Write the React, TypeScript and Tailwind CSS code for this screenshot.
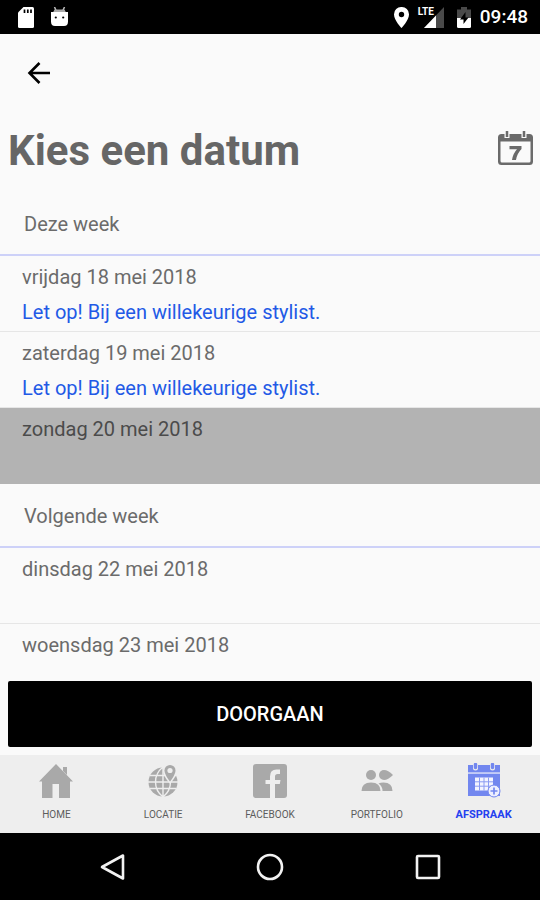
import { useState } from "react";
import clsx from "clsx";

type Day = { label: string; note?: string; closed?: boolean };

const weeks: { title: string; days: Day[] }[] = [
  {
    title: "Deze week",
    days: [
      { label: "vrijdag 18 mei 2018", note: "Let op! Bij een willekeurige stylist." },
      { label: "zaterdag 19 mei 2018", note: "Let op! Bij een willekeurige stylist." },
      { label: "zondag 20 mei 2018", closed: true },
    ],
  },
  {
    title: "Volgende week",
    days: [{ label: "dinsdag 22 mei 2018" }, { label: "woensdag 23 mei 2018" }],
  },
];

function StatusBar() {
  return (
    <div className="flex h-[34px] shrink-0 items-center justify-between bg-black pl-[18px] pr-3 text-white">
      <div className="flex items-center gap-4">
        <svg width="17" height="21" viewBox="0 0 17 21">
          <path d="M5.500 0h9A1.500 1.500 0 0 1 16 1.500v18a1.500 1.500 0 0 1-1.500 1.500h-13A1.500 1.500 0 0 1 0 19.500V5.500z" fill="#fff" />
          <path d="M6.500 2.500v3.500M9.800 2.500v3.500M13 2.500v3.500" stroke="#000" strokeWidth="1.700" />
        </svg>
        <svg width="17" height="21" viewBox="0 0 17 21">
          <path d="M3.500 0l2 4.500M13.500 0l-2 4.500" stroke="#bbb" strokeWidth="1.500" />
          <path d="M3.500 2.500h10l1.500 3H2z" fill="#aaa" />
          <path d="M0 5h17v9.500q0 4.500-4 4.500H4q-4 0-4-4.500z" fill="#fff" />
          <circle cx="4.800" cy="10.500" r="1.100" />
          <circle cx="12.200" cy="10.500" r="1.100" />
        </svg>
      </div>
      <div className="flex items-center">
        <svg width="15" height="21" viewBox="0 0 15 21" className="mr-[9px]">
          <path fillRule="evenodd" d="M7.500 0A7.300 7.300 0 0 1 15 7.400C15 13 7.500 21 7.500 21S0 13 0 7.400A7.300 7.300 0 0 1 7.500 0zm0 4.800a2.700 2.700 0 1 0 0 5.400 2.700 2.700 0 0 0 0-5.400z" fill="#fff" />
        </svg>
        <div className="relative mr-3 h-[21px] w-[27px]">
          <svg width="27" height="21" viewBox="0 0 27 21">
            <path d="M26 0v21H6z" fill="#4a4a4a" />
            <path d="M18 8.400V21H6z" fill="#fff" />
          </svg>
          <span className="absolute left-0 top-0 bg-black text-[10px] leading-[10px] font-bold">LTE</span>
        </div>
        <svg width="14" height="21" viewBox="0 0 14 21" className="mr-[9px]">
          <path d="M4 0h6v2.500h4V11H0V2.500h4z" fill="#4a4a4a" />
          <path d="M0 11h14v8.500q0 1.500-1.500 1.500h-11Q0 21 0 19.500z" fill="#fff" />
          <path d="M8.500 5l-5.500 7.500h3.500V17l5-6.500H8.500z" fill="#000" />
        </svg>
        <span className="text-[19px] leading-6 font-medium">09:48</span>
      </div>
    </div>
  );
}

function CalendarIcon() {
  return (
    <svg width="35" height="36" viewBox="0 0 35 36">
      <path fillRule="evenodd" d="M3.500 3h28Q35 3 35 6.500v24q0 3.500-3.500 3.500h-28Q0 34 0 30.500v-24Q0 3 3.500 3zM2.500 10.500v19.500q0 1.500 1.500 1.500h27q1.500 0 1.500-1.500V10.500z" fill="#6a6a6a" />
      <path d="M9 0v7M26 0v7" stroke="#fafafa" strokeWidth="5" />
      <path d="M9 0v6M26 0v6" stroke="#6a6a6a" strokeWidth="2.500" />
      <path d="M11.500 15h12v3q-4.500 4.500-5.500 11h-4q1-6.500 5-10.700h-7.500z" fill="#6a6a6a" />
    </svg>
  );
}

function HomeIcon() {
  return (
    <svg width="34" height="36" viewBox="0 0 34 36" fill="#a9a9a9">
      <path d="M17 1L34 18.500h-3V35H20V21h-6.500v14H3V18.500H0z" />
      <path d="M24 4h4v8l-4-4z" />
    </svg>
  );
}

function GlobeIcon() {
  return (
    <svg width="34" height="36" viewBox="0 0 34 36">
      <circle cx="17" cy="19" r="14.500" fill="#a9a9a9" />
      <path d="M2 19h30M4 12.500h26M4 25.500h26M17 4v30M17 4C7 12 7 26 17 34M17 4c10 8 10 22 0 30" fill="none" stroke="#eee" strokeWidth="1.400" />
      <path d="M24 2a5.500 5.500 0 0 1 5.500 5.500C29.500 12 24 18.500 24 18.500S18.500 12 18.500 7.500A5.500 5.500 0 0 1 24 2z" fill="#a9a9a9" stroke="#eee" strokeWidth="3" paintOrder="stroke" />
      <circle cx="24" cy="7.500" r="2.600" fill="#eee" />
    </svg>
  );
}

function FacebookIcon() {
  return (
    <svg width="34" height="36" viewBox="0 0 34 36">
      <rect y="1" width="34" height="34" rx="3" fill="#a9a9a9" />
      <path d="M17 35V21h-4.500v-4H17v-3.500Q17 6.500 23.500 6.500H27v4.500h-2.500Q22 11 22 13.500V17h5.500l-.7 4H22v14z" fill="#eee" />
    </svg>
  );
}

function PeopleIcon() {
  return (
    <svg width="34" height="36" viewBox="0 0 34 36" fill="#a9a9a9">
      <circle cx="11" cy="12" r="5" />
      <path d="M24 7q4 0 9 5-5 5-9 5a5 5 0 0 1 0-10z" />
      <path d="M1.500 28q0-8.500 9.500-8.500t9.500 8.500z" />
      <path d="M18.500 20.500q2-1 5-1 9 0 9 8.500h-10q0-5-4-7.500z" />
    </svg>
  );
}

function AppointmentIcon() {
  return (
    <svg width="34" height="36" viewBox="0 0 34 36">
      <path d="M1 2h32v7.500H1zM1 11h32v22H1z" fill="#7287ef" />
      <path d="M1 9.500h32V11H1z" fill="#c3cbf8" />
      <path d="M8.500 1v4M25.500 1v4" stroke="#eee" strokeWidth="5" strokeLinecap="round" />
      <path d="M8.500 1.500v3M25.500 1.500v3" stroke="#7287ef" strokeWidth="3.500" strokeLinecap="round" />
      <path d="M8 14.500h18v13H8z" fill="#f4f5ff" />
      <path d="M8 18.800h18M8 23.200h18M12.500 14.500v13M17 14.500v13M21.500 14.500v13" stroke="#8b9cf2" />
      <circle cx="27" cy="28" r="6" fill="#eef0ff" stroke="#7287ef" />
      <path d="M27 24.500v7M23.500 28h7" stroke="#7287ef" strokeWidth="1.700" />
    </svg>
  );
}

const tabs = [
  { label: "HOME", Icon: HomeIcon },
  { label: "LOCATIE", Icon: GlobeIcon },
  { label: "FACEBOOK", Icon: FacebookIcon },
  { label: "PORTFOLIO", Icon: PeopleIcon },
  { label: "AFSPRAAK", Icon: AppointmentIcon, active: true },
];

function TabBar() {
  return (
    <nav className="flex h-[78px] shrink-0 bg-[#eeeeee] px-[3px]">
      {tabs.map(({ label, Icon, active }) => (
        <a
          key={label}
          href={`#${label.toLowerCase()}`}
          className={clsx(
            "flex flex-1 flex-col items-center pt-2",
            active ? "text-[11px] font-bold text-[#2440f0]" : "text-[10px] text-[#5c5c5c]"
          )}
        >
          <Icon />
          <span className="mt-2 leading-4">{label}</span>
        </a>
      ))}
    </nav>
  );
}

function SystemNav() {
  return (
    <div className="flex h-[67px] shrink-0 items-center justify-center gap-[130px] bg-black">
      <button aria-label="Terug">
        <svg width="28" height="28" viewBox="0 0 28 28" fill="none" stroke="#f2f2f2" strokeWidth="2.600" strokeLinejoin="round">
          <path d="M25 2.500v23L4 14z" />
        </svg>
      </button>
      <button aria-label="Start">
        <svg width="28" height="28" viewBox="0 0 28 28" fill="none" stroke="#f2f2f2" strokeWidth="2.600">
          <circle cx="14" cy="14" r="12" />
        </svg>
      </button>
      <button aria-label="Overzicht">
        <svg width="28" height="28" viewBox="0 0 28 28" fill="none" stroke="#f2f2f2" strokeWidth="2.600">
          <rect x="3" y="3" width="22" height="22" rx="1" />
        </svg>
      </button>
    </div>
  );
}

export default function App() {
  const [selected, setSelected] = useState("");

  return (
    <div className="flex h-screen flex-col bg-[#fafafa] font-[Roboto,sans-serif] text-[#6b6b6b]">
      <StatusBar />
      <header className="shrink-0 pb-0.5">
        <div className="flex h-[78px] items-center pl-[27px]">
          <button aria-label="Vorige">
            <svg width="24" height="24" viewBox="0 0 24 24" fill="none" stroke="#000" strokeWidth="2.600">
              <path d="M23 12H2.500M12.500 2L2.500 12l10 10" />
            </svg>
          </button>
        </div>
        <div className="flex h-[78px] items-center justify-between pl-2 pr-[7px]">
          <h1 className="text-[42px] leading-[50px] font-bold text-[#666666]">Kies een datum</h1>
          <button aria-label="Kalender" className="pb-1">
            <CalendarIcon />
          </button>
        </div>
      </header>

      <main className="min-h-0 flex-1 overflow-y-auto text-[20px] leading-6 [scrollbar-width:none]">
        {weeks.map((week) => (
          <section key={week.title}>
            <h2 className="h-[64px] border-b-2 border-[#cdd1f8] pl-6 pt-5">{week.title}</h2>
            {week.days.map((day) => (
              <button
                key={day.label}
                disabled={day.closed}
                aria-pressed={selected === day.label}
                onClick={() => setSelected(day.label)}
                className={clsx(
                  "flex min-h-[76px] w-full flex-col gap-[11px] border-b pl-[22px] pt-[9px] pb-[7px] text-left",
                  day.closed ? "border-[#b3b3b3] bg-[#b3b3b3] text-[#4b4b4b]" : "border-[#e6e6e6]"
                )}
              >
                <span>{day.label}</span>
                {day.note && <span className="text-[#2259e6]">{day.note}</span>}
              </button>
            ))}
          </section>
        ))}
      </main>

      <div className="shrink-0 bg-[#fafafa] px-2 pb-2 pt-1">
        <button className="h-[66px] w-full rounded-[2px] bg-black text-[20px] font-medium text-white">DOORGAAN</button>
      </div>
      <TabBar />
      <SystemNav />
    </div>
  );
}
